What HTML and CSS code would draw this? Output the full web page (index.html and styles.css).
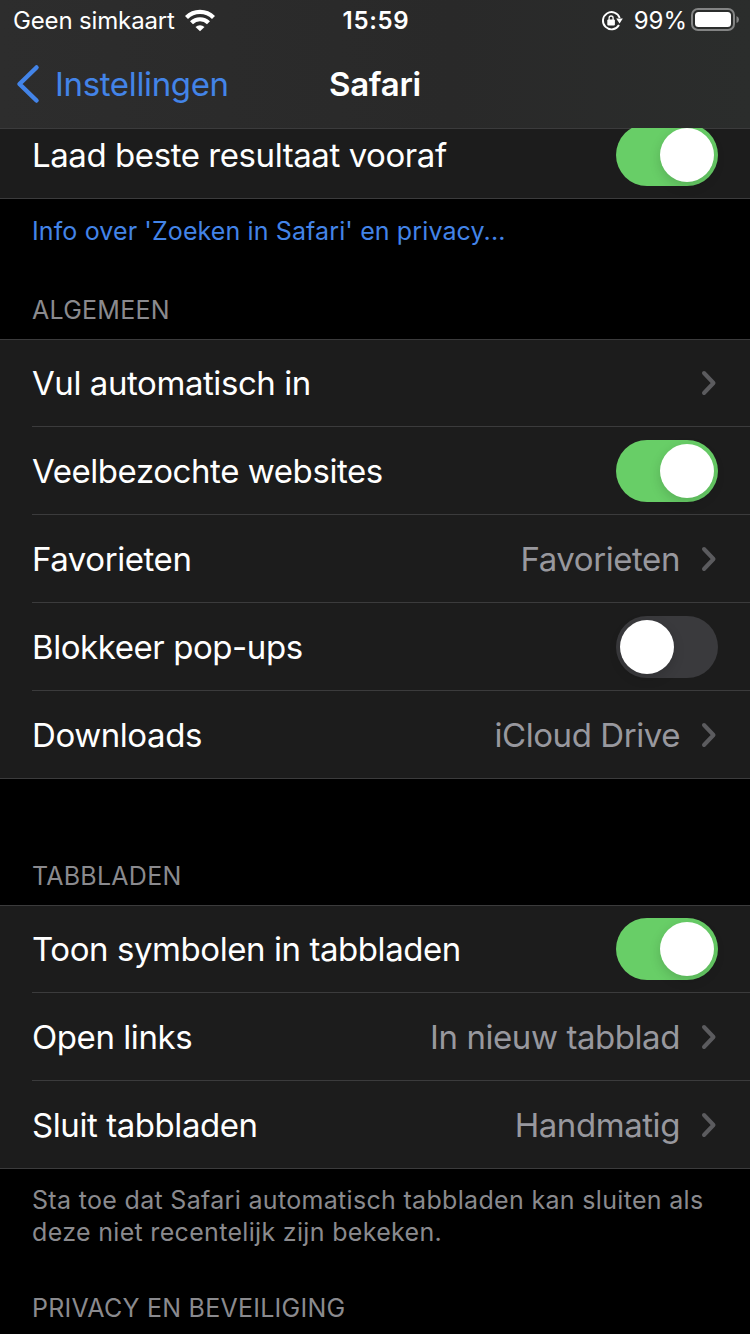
FILE: index.html
```
<!doctype html>
<html lang="nl">

<head>
  <meta charset="utf-8">
  <meta name="viewport" content="width=device-width, initial-scale=1">
  <title>Safari</title>
  <link rel="stylesheet" href="styles.css">
</head>

<body>
  <header class="header">
    <div class="status-bar">
      <div class="carrier">
        <span class="carrier-name">Geen simkaart</span>
        <svg class="wifi" width="30" height="23" viewBox="0 0 30 23">
          <g fill="none" stroke="#fff" stroke-width="4.200">
            <path d="M1.500 8.600a19 19 0 0 1 27 0" />
            <path d="M6.500 13.800a12 12 0 0 1 17 0" />
          </g>
          <path d="M15 22.300l-4.500-4.300a6.600 6.600 0 0 1 9 0z" fill="#fff" />
        </svg>
      </div>
      <span class="time">15:59</span>
      <div class="power">
        <svg class="lock" width="22" height="22" viewBox="0 0 22 22">
          <path d="M18 15A8.600 8.600 0 1 1 18.700 8" fill="none" stroke="#fff" stroke-width="1.900" />
          <path d="M15.200 8.600h6.600l-3.200 4.800z" fill="#fff" />
          <rect x="6.300" y="9.500" width="7.600" height="6" rx="1" fill="#fff" />
          <path d="M8.100 10V8a2 2 0 0 1 4 0v2" fill="none" stroke="#fff" stroke-width="1.300" />
        </svg>
        <span class="percent">99%</span>
        <svg width="48" height="24" viewBox="0 0 48 24">
          <rect x="1" y="1" width="42" height="21" rx="6" fill="none" stroke="#838484" stroke-width="2" />
          <rect x="4" y="4" width="36" height="15" rx="3.500" fill="#fff" />
          <path d="M45.500 8q2.500 1 2.500 3.500t-2.500 3.500z" fill="#838484" />
        </svg>
      </div>
    </div>
    <nav class="nav">
      <a class="back" href="#">
        <svg width="24" height="40" viewBox="0 0 24 40"><path d="M20.500 3.500L3.500 20l17 16.500" /></svg>
        <span>Instellingen</span>
      </a>
      <h1>Safari</h1>
    </nav>
  </header>

  <main>
    <div class="group scrolled">
      <div class="row">
        <span class="label">Laad beste resultaat vooraf</span>
        <span class="toggle on"></span>
      </div>
    </div>
    <a class="info" href="#">Info over 'Zoeken in Safari' en privacy...</a>

    <h2>ALGEMEEN</h2>
    <div class="group">
      <div class="row">
        <span class="label">Vul automatisch in</span>
        <svg class="chevron" width="16" height="26" viewBox="0 0 16 26"><path d="M3 3l9.500 10L3 23" /></svg>
      </div>
      <div class="row">
        <span class="label">Veelbezochte websites</span>
        <span class="toggle on"></span>
      </div>
      <div class="row">
        <span class="label">Favorieten</span>
        <span class="value">Favorieten</span>
        <svg class="chevron" width="16" height="26" viewBox="0 0 16 26"><path d="M3 3l9.500 10L3 23" /></svg>
      </div>
      <div class="row">
        <span class="label">Blokkeer pop-ups</span>
        <span class="toggle"></span>
      </div>
      <div class="row">
        <span class="label">Downloads</span>
        <span class="value">iCloud Drive</span>
        <svg class="chevron" width="16" height="26" viewBox="0 0 16 26"><path d="M3 3l9.500 10L3 23" /></svg>
      </div>
    </div>

    <h2 class="tabs-title">TABBLADEN</h2>
    <div class="group">
      <div class="row">
        <span class="label">Toon symbolen in tabbladen</span>
        <span class="toggle on"></span>
      </div>
      <div class="row">
        <span class="label">Open links</span>
        <span class="value">In nieuw tabblad</span>
        <svg class="chevron" width="16" height="26" viewBox="0 0 16 26"><path d="M3 3l9.500 10L3 23" /></svg>
      </div>
      <div class="row">
        <span class="label">Sluit tabbladen</span>
        <span class="value">Handmatig</span>
        <svg class="chevron" width="16" height="26" viewBox="0 0 16 26"><path d="M3 3l9.500 10L3 23" /></svg>
      </div>
    </div>
    <p class="note">Sta toe dat Safari automatisch tabbladen kan sluiten als<br>deze niet recentelijk zijn bekeken.</p>

    <h2 class="privacy-title">PRIVACY EN BEVEILIGING</h2>
  </main>
</body>

</html>
```
FILE: styles.css
```
* {
  box-sizing: border-box;
}

body {
  margin: 0;
  height: 1334px;
  overflow: hidden;
  background: #000;
  color: #fff;
  font-family: Inter, "Liberation Sans", sans-serif;
}

a {
  text-decoration: none;
}

svg {
  display: block;
  flex: none;
}

/* Header */
.header {
  height: 128px;
  background: linear-gradient(90deg, #2d2d2d, #292929 60%, #2b2d2c);
}

.status-bar {
  display: grid;
  grid-template-columns: 1fr auto 1fr;
  align-items: center;
  height: 40px;
  padding: 0 11px 0 13px;
  font-size: 24px;
  line-height: 38px;
}

.carrier {
  display: flex;
  align-items: center;
  gap: 10px;
}

.carrier-name {
  padding-top: 2px;
  letter-spacing: -0.15px;
}

.time {
  padding-top: 2px;
  font-weight: 600;
  letter-spacing: 0.7px;
}

.power {
  display: flex;
  align-items: center;
  justify-content: flex-end;
}

.lock {
  margin-top: 2px;
}

.percent {
  margin: 0 4px 0 11px;
  padding-top: 2px;
}

.nav {
  display: grid;
  grid-template-columns: 1fr auto 1fr;
  align-items: center;
  height: 88px;
  padding: 0 16px;
}

.back {
  display: flex;
  align-items: center;
  gap: 15px;
  color: #4384e8;
  font-size: 33px;
  letter-spacing: -0.35px;
}

.back path {
  fill: none;
  stroke: #4384e8;
  stroke-width: 4.5;
  stroke-linecap: round;
  stroke-linejoin: round;
}

h1 {
  margin: 0;
  font-size: 33px;
  font-weight: 600;
  letter-spacing: -0.3px;
}

/* Lists */
.group {
  background: #1c1c1c;
  border-top: 1px solid #3b3b3c;
  border-bottom: 1px solid #3b3b3c;
}

.row {
  display: flex;
  align-items: center;
  height: 88px;
  margin-left: 32px;
  padding-right: 32px;
  border-bottom: 1px solid #3b3b3c;
  font-size: 33px;
  letter-spacing: -0.43px;
}

.row:first-child {
  height: 87px;
}

.row:last-child {
  height: 87px;
  border-bottom: none;
}

/* the first list is partly under the header */
.scrolled {
  display: flex;
  flex-direction: column;
  justify-content: flex-end;
  height: 71px;
  overflow: hidden;
  border-top: none;
  box-shadow: inset 0 1px #3b3b3c;
}

.scrolled .row {
  flex: none;
}

.label {
  margin-right: auto;
}

.value {
  color: #98989e;
}

.chevron {
  margin-left: 21px;
  margin-right: 1px;
}

.chevron path {
  fill: none;
  stroke: #5b5b5e;
  stroke-width: 4;
  stroke-linecap: round;
  stroke-linejoin: round;
}

.toggle {
  display: flex;
  width: 102px;
  height: 62px;
  padding: 4px;
  border-radius: 31px;
  background: #3a3a3d;
}

.toggle::before {
  content: "";
  width: 54px;
  height: 54px;
  border-radius: 50%;
  background: #fff;
  box-shadow: 0 4px 12px rgb(0 0 0 / 0.15);
}

.toggle.on {
  justify-content: flex-end;
  background: #68ce67;
}

.info {
  display: block;
  padding: 16px 32px 0;
  color: #4384e8;
  font-size: 25px;
  letter-spacing: 0.12px;
  line-height: 32px;
}

h2 {
  margin: 0;
  padding: 47px 32px 13px;
  color: #8a8a8e;
  font-size: 25px;
  font-weight: 400;
  letter-spacing: 0.25px;
  line-height: 32px;
}

.tabs-title {
  padding-top: 81px;
}

.note {
  margin: 0;
  padding: 15px 32px 0;
  color: #8a8a8e;
  font-size: 25px;
  letter-spacing: 0.32px;
  line-height: 32px;
}

.privacy-title {
  padding-top: 44px;
}
```
